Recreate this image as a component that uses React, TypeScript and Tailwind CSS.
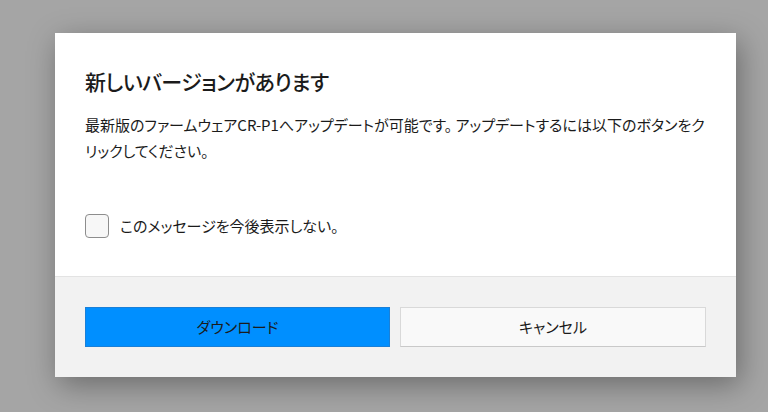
import React, { useState } from 'react';

const jp = "[font-family:'Noto_Sans_CJK_JP','Noto_Sans',sans-serif] [font-feature-settings:'palt']";

export default function App() {
    const [dontShow, setDontShow] = useState(false);

    return (
        <div className={`h-[412px] w-full overflow-hidden bg-[#a5a5a5] pt-[33px] pl-[55px] ${jp}`}>
            <div className="w-[681px] bg-white shadow-[4px_8px_28px_rgba(0,0,0,0.35)]">
                {/* 本文 */}
                <div className="px-[30px] pt-[33px] pb-[38px] text-[#1b1b1b]">
                    <h2 className="text-[21px] leading-[30px] font-medium tracking-[-0.5px]">新しいバージョンがあります</h2>
                    <p className="mt-[16px] text-[15px] leading-[26px]">
                        最新版のファームウェアCR-P1へアップデートが可能です。 アップデートするには以下のボタンをク
                        <br />
                        リックしてください。
                    </p>
                    <label className="mt-[50px] flex h-6 cursor-pointer items-center gap-[11px] text-[15px]">
                        <button
                            type="button"
                            onClick={() => setDontShow(!dontShow)}
                            className="flex h-6 w-6 items-center justify-center rounded-[4px] border border-[#8d8d8d] bg-[#f7f7f7]"
                        >
                            {dontShow && (
                                <svg viewBox="0 0 16 16" className="h-4 w-4" fill="none" stroke="#1b1b1b" strokeWidth="1.5">
                                    <path d="M3 8.5l3 3 7-7" />
                                </svg>
                            )}
                        </button>
                        このメッセージを今後表示しない。
                    </label>
                </div>

                {/* ボタン */}
                <div className="flex gap-[10px] border-t border-[#e3e3e3] bg-[#f2f2f2] px-[30px] pt-[30px] pb-[30px]">
                    <button className="h-10 w-[305px] border border-[#1a80d8] bg-[#008fff] text-[15px] text-[#1b1b1b]">
                        ダウンロード
                    </button>
                    <button className="h-10 w-[306px] border border-[#d9d9d9] border-b-[#c9c9c9] bg-[#f9f9f9] text-[15px] text-[#1b1b1b]">
                        キャンセル
                    </button>
                </div>
            </div>
        </div>
    );
}
